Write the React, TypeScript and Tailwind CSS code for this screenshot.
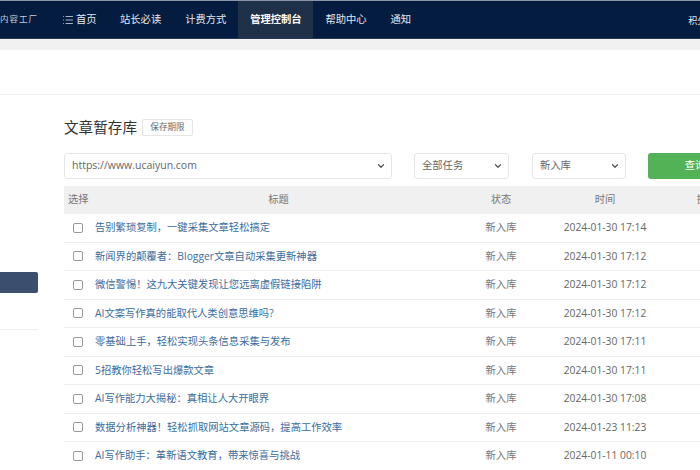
import { ChevronDown, List } from 'lucide-react';

const rows = [
  ['告别繁琐复制，一键采集文章轻松搞定', '2024-01-30 17:14'],
  ['新闻界的颠覆者：Blogger文章自动采集更新神器', '2024-01-30 17:12'],
  ['微信警惕！这九大关键发现让您远离虚假链接陷阱', '2024-01-30 17:12'],
  ['AI文案写作真的能取代人类创意思维吗?', '2024-01-30 17:12'],
  ['零基础上手，轻松实现头条信息采集与发布', '2024-01-30 17:11'],
  ['5招教你轻松写出爆款文章', '2024-01-30 17:11'],
  ['AI写作能力大揭秘：真相让人大开眼界', '2024-01-30 17:08'],
  ['数据分析神器！轻松抓取网站文章源码，提高工作效率', '2024-01-23 11:23'],
  ['AI写作助手：革新语文教育，带来惊喜与挑战', '2024-01-11 00:10'],
];

const navItems = ['站长必读', '计费方式'];

function Select({ label, className }: { label: string; className: string }) {
  return (
    <div
      className={`flex h-[26px] shrink-0 items-center justify-between rounded-[3px] border border-[#e6e6e6] bg-white pl-[7px] pr-[5px] text-[#666] ${className}`}
    >
      <span>{label}</span>
      <ChevronDown className="h-[10px] w-[10px] text-[#555]" strokeWidth={3} />
    </div>
  );
}

export default function App() {
  return (
    <div className="relative h-[470px] w-[700px] overflow-hidden bg-white font-['Open_Sans','Noto_Sans_CJK_SC',sans-serif] text-[10.3px]">
      {/* Top nav */}
      <header className="flex h-[39px] items-center whitespace-nowrap border-t border-b border-t-[#8a94a6] border-b-[#2b3a52] bg-[#031c40] text-[#e4e8ee]">
        <div className="flex h-full w-[50px] shrink-0 items-center justify-end overflow-hidden pr-[12px]">
          <span className="shrink-0 text-[8.5px] tracking-[1px] text-[#c9ced6]">内容工厂</span>
        </div>
        <a className="flex h-full w-[58px] shrink-0 items-center gap-[2px] pl-[12px]">
          <List className="h-[12px] w-[12px]" strokeWidth={1.5} />
          首页
        </a>
        {navItems.map((item) => (
          <a key={item} className="flex h-full shrink-0 items-center px-[12px]">
            {item}
          </a>
        ))}
        <a className="flex h-full w-[75px] shrink-0 items-center justify-center bg-[#1e3148] font-bold text-white">
          管理控制台
        </a>
        <a className="flex h-full shrink-0 items-center px-[12px]">帮助中心</a>
        <a className="flex h-full shrink-0 items-center px-[12px]">通知</a>
        <span className="ml-[265px] mt-[3px] shrink-0 text-[9px]">积分</span>
      </header>
      <div className="h-[11px] bg-[#f1f1f1]" />
      <div className="h-[45px] border-b border-[#f2f2f2]" />

      <div className="flex">
        {/* Sidebar */}
        <aside className="w-[38px] shrink-0 pt-[177px]">
          <div className="h-[21px] rounded-r-[2px] bg-[#3c4e6e]" />
          <div className="mt-[36px] border-t border-[#eeeeee]" />
        </aside>

        <main className="ml-[26px] w-[660px] shrink-0">
          <div className="mt-[21px] flex h-[22px] items-center">
            <h1 className="text-[14.6px] leading-none text-[#333]">文章暂存库</h1>
            <span className="ml-[5px] flex h-[17px] w-[51px] items-center justify-center rounded-[2px] border border-[#e6e6e6] text-[8.6px] text-[#666]">
              保存期限
            </span>
          </div>

          <div className="mt-[15px] flex text-[10.3px]">
            <Select label="https://www.ucaiyun.com" className="w-[328px] text-[10.5px]" />
            <Select label="全部任务" className="ml-[22px] w-[95px]" />
            <Select label="新入库" className="ml-[23px] w-[94px]" />
            <button className="ml-[22px] flex h-[26px] w-[94px] shrink-0 items-center justify-center rounded-[3px] bg-[#52b356] text-white">
              查询
            </button>
          </div>

          <div className="mt-[7px] w-[700px]">
            <div className="grid h-[28px] grid-cols-[31px_367px_78px_130px_74px] items-center bg-[#f0f0f0] text-[#777]">
              <span className="pl-[4px]">选择</span>
              <span className="text-center">标题</span>
              <span className="text-center">状态</span>
              <span className="text-center">时间</span>
              <span className="text-center">操作</span>
            </div>
            {rows.map(([title, time]) => (
              <div
                key={title}
                className="grid h-[28.5px] grid-cols-[31px_367px_78px_130px_74px] items-center border-b border-[#eeeeee]"
              >
                <input
                  type="checkbox"
                  className="ml-[9px] h-[10px] w-[10px] appearance-none rounded-[2px] border border-[#999] bg-white"
                />
                <a className="text-[#3b6d9e]">{title}</a>
                <span className="text-center text-[#777]">新入库</span>
                <span className="text-center text-[#666]">{time}</span>
                <span />
              </div>
            ))}
          </div>
        </main>
      </div>
    </div>
  );
}
